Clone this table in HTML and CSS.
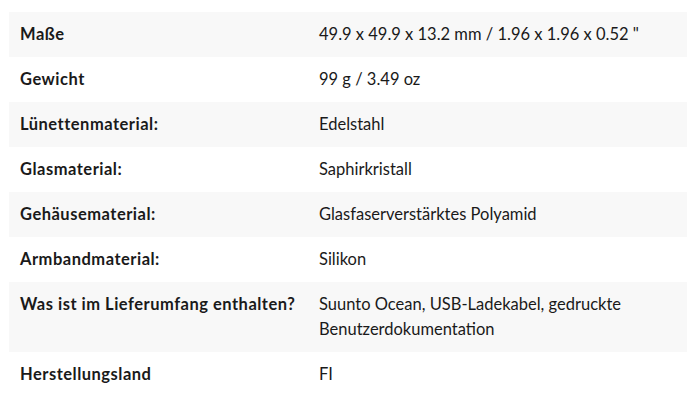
FILE: index.html
```html
<!DOCTYPE html>
<html lang="de">
<head>
<meta charset="utf-8">
<link rel="stylesheet" href="styles.css">
</head>
<body>
<table class="specs">
  <tbody>
    <tr><th>Maße</th><td>49.9 x 49.9 x 13.2 mm / 1.96 x 1.96 x 0.52 "</td></tr>
    <tr><th>Gewicht</th><td>99 g / 3.49 oz</td></tr>
    <tr><th>Lünettenmaterial:</th><td>Edelstahl</td></tr>
    <tr><th>Glasmaterial:</th><td>Saphirkristall</td></tr>
    <tr><th>Gehäusematerial:</th><td>Glasfaserverstärktes Polyamid</td></tr>
    <tr><th>Armbandmaterial:</th><td>Silikon</td></tr>
    <tr><th>Was ist im Lieferumfang enthalten?</th><td>Suunto Ocean, USB-Ladekabel, gedruckte Benutzerdokumentation</td></tr>
    <tr><th>Herstellungsland</th><td>FI</td></tr>
  </tbody>
</table>
</body>
</html>
```

FILE: styles.css
```css
html, body {
  margin: 0;
  padding: 0;
  background: #ffffff;
}
body {
  padding: 12px 0 0 9px;
  font-family: Lato, "Liberation Sans", sans-serif;
  font-size: 16.5px;
  color: #1a1a1a;
}
.specs {
  border-collapse: collapse;
  width: 678px;
}
.specs tr:nth-child(odd) {
  background: #f8f8f8;
}
.specs th,
.specs td {
  text-align: left;
  vertical-align: top;
  padding: 10px 10px 10px 11px;
  line-height: 25px;
}
.specs th {
  width: 279px;
  font-weight: 700;
  letter-spacing: 0.5px;
}
.specs td {
  font-weight: 400;
  padding-left: 10px;
}
```
